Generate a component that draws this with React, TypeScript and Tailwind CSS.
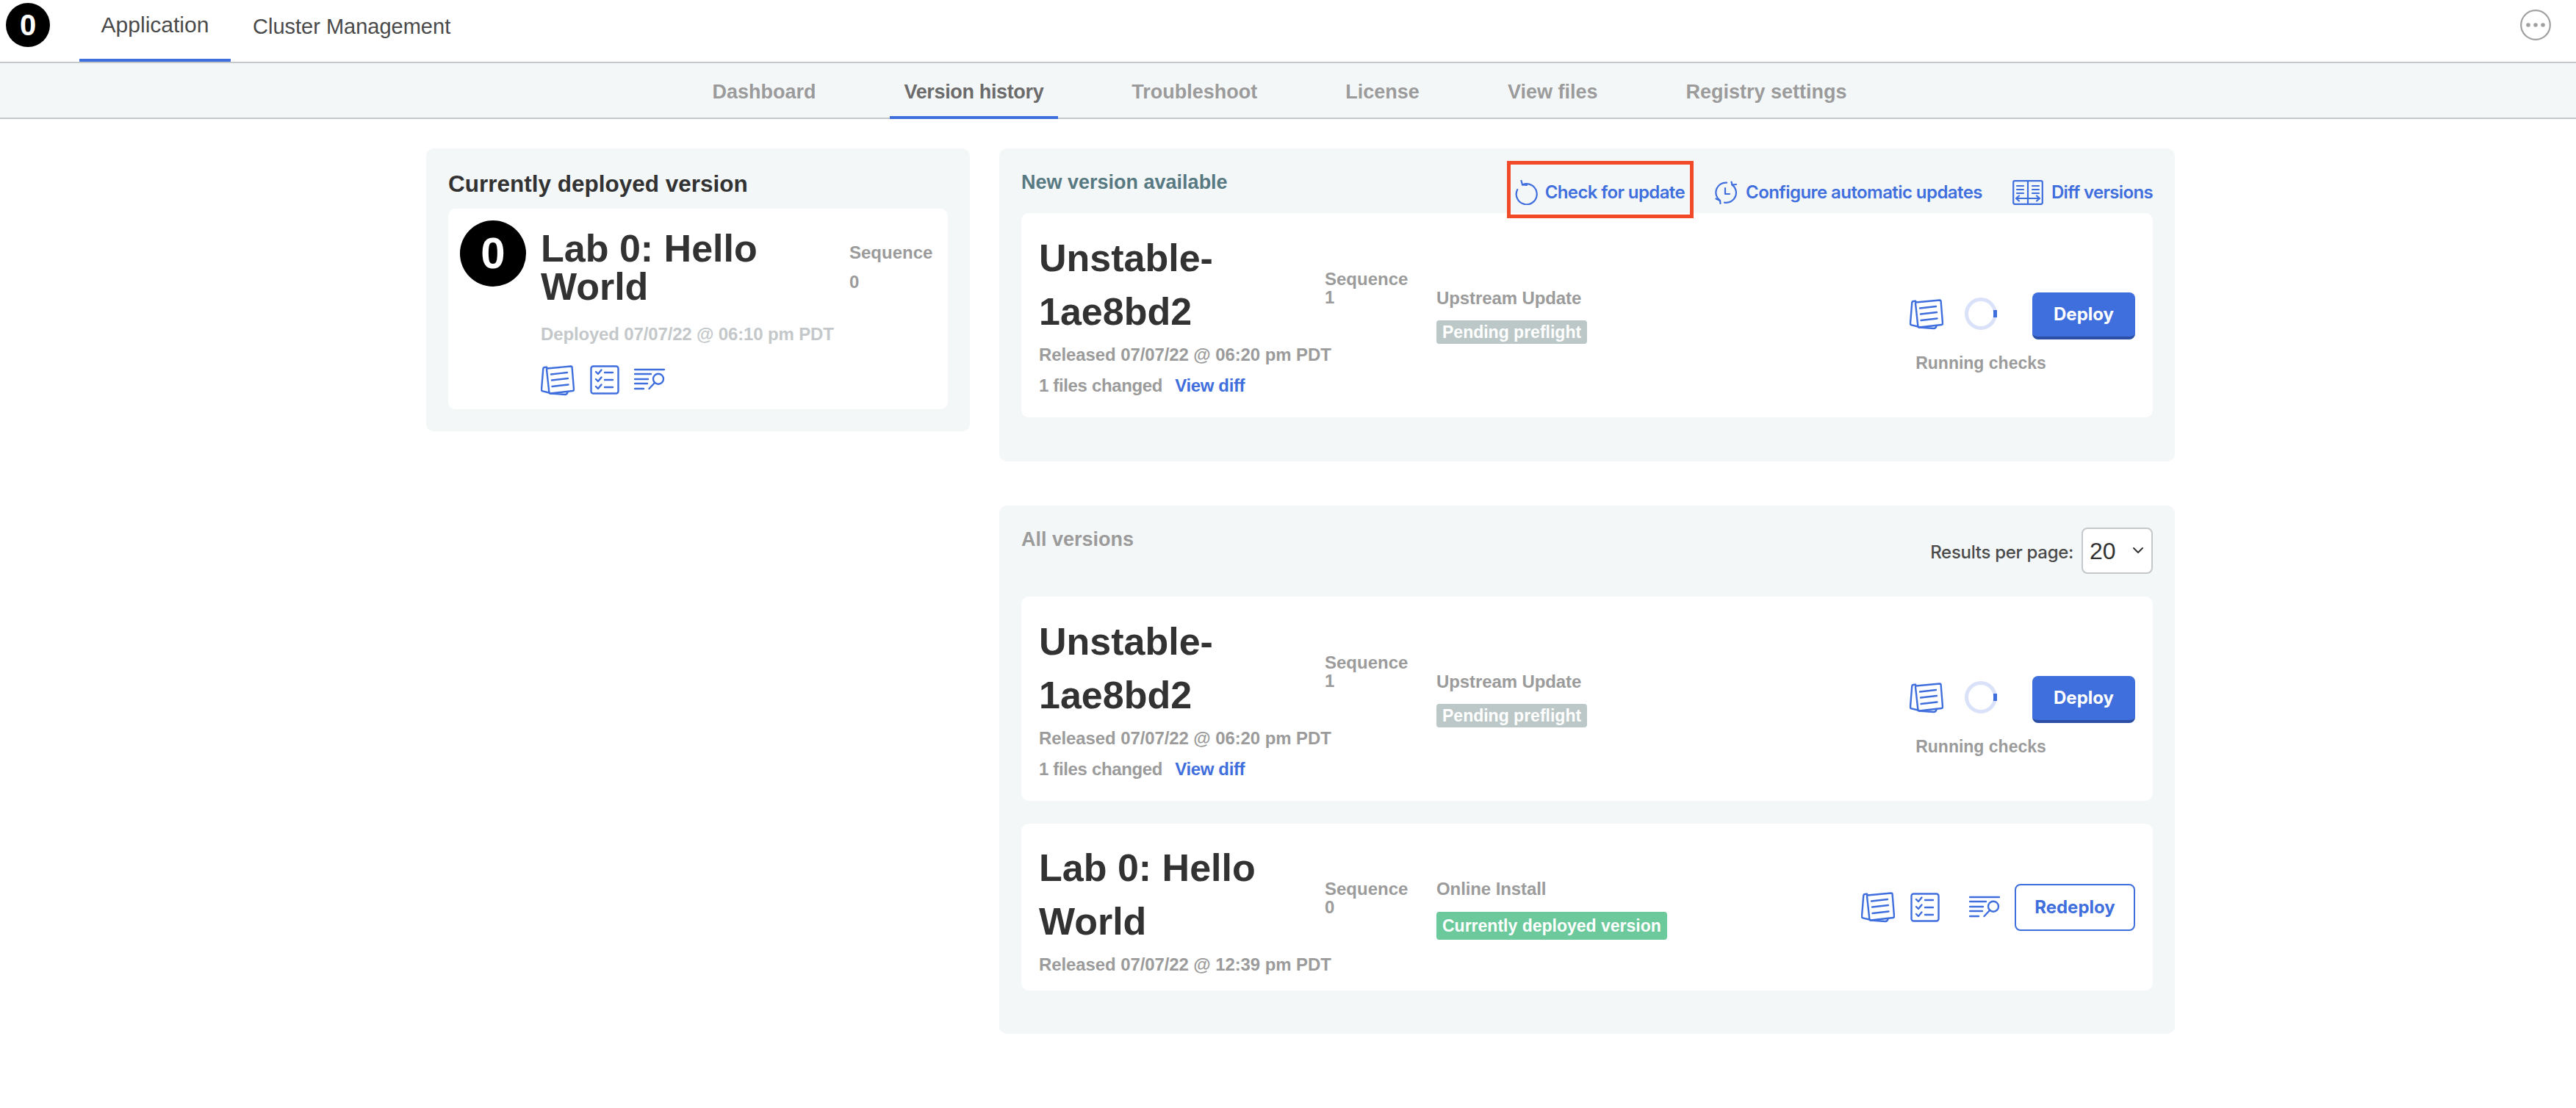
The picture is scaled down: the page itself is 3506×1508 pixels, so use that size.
import { ChevronDown } from 'lucide-react';

const NotesIcon = () => (
    <svg width="46" height="42" viewBox="0 0 46 42" fill="none" stroke="#3f6edd" strokeWidth="2.4" strokeLinecap="round" strokeLinejoin="round">
        <path d="M8.5 4.5 L41 1.5 Q42.5 1.5 42.6 3 L45 33 Q45 35 43.5 35 L13 38.5 Q11.6 38.6 11.4 37 L8 6 Q8 4.6 8.5 4.5 Z" />
        <path d="M8.2 2.8 L5 3 Q3.5 3.2 3.3 4.6 L1 33 Q0.9 35 2.5 35.4 L11.5 37.5" />
        <path d="M13 38.5 L33 40 Q35.5 40 36.5 37" />
        <path d="M14 12.5 L36 10 M15 20.5 L37 18 M15.5 29 L37.5 26.5" />
    </svg>
);

const ChecklistIcon = () => (
    <svg width="40" height="40" viewBox="0 0 40 40" fill="none" stroke="#3f6edd" strokeWidth="2.4" strokeLinecap="round" strokeLinejoin="round">
        <rect x="1.5" y="1.5" width="37" height="37" rx="3" />
        <path d="M8 9 L11 12 L15.5 6.5 M8 19 L11 22 L15.5 16.5 M8 29 L11 32 L15.5 26.5" />
        <path d="M20 10 H31 M20 20 H31 M20 30 H31" />
    </svg>
);

const LogSearchIcon = () => (
    <svg width="42" height="40" viewBox="0 0 42 40" fill="none" stroke="#3f6edd" strokeWidth="2.4" strokeLinecap="round">
        <path d="M1 6 H41 M1 12 H23 M1 19 H19 M1 25 H18 M1 32 H13" />
        <circle cx="33" cy="18.7" r="7" />
        <path d="M28 24 L20.5 32" />
    </svg>
);

const SpinnerIcon = () => (
    <svg width="44" height="44" viewBox="0 0 44 44" fill="none">
        <circle cx="22" cy="22" r="19.5" stroke="#d9e2f8" strokeWidth="5" />
        <path d="M41.5 17 V27" stroke="#3f6edd" strokeWidth="5" />
    </svg>
);

const RefreshIcon = () => (
    <svg width="32" height="34" viewBox="0 0 32 34" fill="none" stroke="#3f6edd" strokeWidth="2.2" strokeLinecap="round" strokeLinejoin="round">
        <path d="M10 6.5 A14 14 0 1 1 3.2 13" />
        <path d="M8.5 1 L10 6.5 L16 7" />
    </svg>
);

const ClockSyncIcon = () => (
    <svg width="32" height="32" viewBox="0 0 32 32" fill="none" stroke="#3f6edd" strokeWidth="2.2" strokeLinecap="round" strokeLinejoin="round">
        <path d="M17 2.6 A13.5 13.5 0 0 0 8 27" />
        <path d="M2.5 24.5 L8 27 L8.5 31" />
        <path d="M14 29.6 A13.5 13.5 0 0 0 24.5 5.5" />
        <path d="M23.5 1.5 L24.5 5.5 L30 5" />
        <path d="M15 10 V18 H21" />
    </svg>
);

const DiffIcon = () => (
    <svg width="42" height="34" viewBox="0 0 42 34" fill="none" stroke="#3f6edd" strokeWidth="2.2" strokeLinecap="round" strokeLinejoin="round">
        <rect x="1.2" y="1.2" width="39.6" height="31.6" rx="2" />
        <path d="M21 1.2 V32.8" />
        <path d="M6 8 H15 M6 13 H15 M6 18 H15 M27 8 H36 M27 13 H36 M27 18 H36" />
        <path d="M5 25 H37 M9 21.5 L5 25 L9 28.5 M33 21.5 L37 25 L33 28.5" />
    </svg>
);

const MoreIcon = () => (
    <svg width="42" height="42" viewBox="0 0 42 42" fill="none">
        <circle cx="21" cy="21" r="19.8" stroke="#a0a0a0" strokeWidth="2.2" />
        <circle cx="11" cy="21" r="2.8" fill="#a0a0a0" />
        <circle cx="21" cy="21" r="2.8" fill="#a0a0a0" />
        <circle cx="31" cy="21" r="2.8" fill="#a0a0a0" />
    </svg>
);

const tabs = ['Dashboard', 'Version history', 'Troubleshoot', 'License', 'View files', 'Registry settings'];

function PendingActions() {
    return (
        <div className="ml-auto self-start mt-[108px] flex items-start">
            <div className="mt-[9px]"><NotesIcon /></div>
            <div className="ml-[29px] mt-[7px] flex w-[44px] flex-col items-center">
                <SpinnerIcon />
                <div className="mt-[30px] whitespace-nowrap text-[23px] leading-[30px] font-bold text-[#9b9b9b]">Running checks</div>
            </div>
            <button className="ml-[48px] h-[64px] w-[140px] rounded-[8px] border-b-[4px] border-[#2c4fa5] bg-[#3f6edd] font-['Inter'] text-[24px] font-bold text-white">Deploy</button>
        </div>
    );
}

function UnstableRow() {
    return (
        <div className="flex h-[278px] items-center rounded-[10px] bg-white px-[24px]">
            <div className="w-[541px] self-start pt-[25px]">
                <div className="flex items-center">
                    <div className="w-[389px] text-[52px] leading-[72.5px] font-bold text-[#323232]">Unstable-<br />1ae8bd2</div>
                    <div className="pt-[9px] text-[24px] leading-[25px] font-bold text-[#9b9b9b]">Sequence<br />1</div>
                </div>
                <div className="mt-[8px] whitespace-nowrap text-[24px] leading-[30px] font-bold tracking-[-0.1px] text-[#9b9b9b]">Released 07/07/22 @ 06:20 pm PDT</div>
                <div className="mt-[12px] text-[24px] leading-[30px] font-bold tracking-[-0.35px] text-[#9b9b9b]">1 files changed<a className="ml-[17px] text-[#3f6edd]">View diff</a></div>
            </div>
            <div className="flex flex-col items-start">
                <div className="text-[24px] leading-[30px] font-bold tracking-[-0.1px] text-[#9b9b9b]">Upstream Update</div>
                <div className="mt-[15px] rounded-[4px] bg-[#bcc7c7] px-[8px] text-[23px] leading-[32px] font-bold text-white">Pending preflight</div>
            </div>
            <PendingActions />
        </div>
    );
}

export default function App() {
    return (
        <div className="min-h-screen bg-white font-['Liberation_Sans',Arial,sans-serif]">
            <header className="flex h-[86px] items-start border-b-[2px] border-[#c4c8ca] bg-white pl-[8px] pr-[34px]">
                <div className="mt-[4px] flex h-[60px] w-[60px] items-center justify-center rounded-full bg-black text-[40px] font-bold text-white">0</div>
                <nav className="ml-[40px] flex h-[84px] items-start">
                    <a className="h-[84px] w-[206px] border-b-[4px] border-[#3f6edd] pt-[14px] text-center text-[30px] leading-[40px] font-medium text-[#4a4a4a]">Application</a>
                    <a className="ml-[30px] pt-[16px] text-[29px] leading-[40px] font-medium text-[#4a4a4a]">Cluster Management</a>
                </nav>
                <div className="ml-auto mt-[13px]"><MoreIcon /></div>
            </header>

            <div className="flex h-[76px] justify-center border-b-[2px] border-[#c4c8ca] bg-[#f4f7f8] pr-[23px]">
                {tabs.map((tab) => (
                    <a
                        key={tab}
                        className={`-mb-[2px] mx-[40px] h-[76px] whitespace-nowrap px-[20px] pt-[20px] text-[27px] leading-[38px] font-bold ${tab === 'Version history' ? 'border-b-[4px] border-[#3f6edd] tracking-[-0.35px] text-[#6b6b6b]' : 'text-[#9b9b9b]'}`}
                    >
                        {tab}
                    </a>
                ))}
            </div>

            <main className="flex items-start gap-[40px] pl-[580px] pt-[40px]">
                <section className="h-[385px] w-[740px] rounded-[10px] bg-[#f4f7f8] px-[30px] pt-[28px]">
                    <h2 className="whitespace-nowrap text-[31.5px] leading-[40px] font-bold text-[#323232]">Currently deployed version</h2>
                    <div className="mt-[14px] flex h-[273px] rounded-[10px] bg-white pl-[16px] pt-[16px]">
                        <div className="flex h-[90px] w-[90px] items-center justify-center rounded-full bg-black text-[60px] font-bold text-white">0</div>
                        <div className="ml-[20px] w-[420px] pt-[12px]">
                            <div className="text-[52px] leading-[52px] font-bold text-[#323232]">Lab 0: Hello World</div>
                            <div className="mt-[24px] whitespace-nowrap text-[24px] leading-[30px] font-bold tracking-[-0.15px] text-[#c4c8ca]">Deployed 07/07/22 @ 06:10 pm PDT</div>
                            <div className="mt-[27px] flex">
                                <NotesIcon />
                                <div className="ml-[21px]"><ChecklistIcon /></div>
                                <div className="ml-[20px]"><LogSearchIcon /></div>
                            </div>
                        </div>
                        <div className="pt-[29px] text-[24px] font-bold text-[#9b9b9b]">
                            <div className="leading-[30px]">Sequence</div>
                            <div className="mt-[10px] leading-[30px]">0</div>
                        </div>
                    </div>
                </section>

                <div className="w-[1600px]">
                    <section className="relative h-[426px] rounded-[10px] bg-[#f4f7f8] px-[30px]">
                        <div className="flex h-[88px] items-start">
                            <h2 className="pt-[28px] text-[27px] leading-[36px] font-bold text-[#577981]">New version available</h2>
                            <div className="ml-auto mt-[42px] flex items-center font-['Inter'] text-[24px] font-semibold text-[#3f6edd]">
                                <RefreshIcon />
                                <a className="ml-[9px] whitespace-nowrap tracking-[-0.6px]">Check for update</a>
                                <div className="ml-[40px]"><ClockSyncIcon /></div>
                                <a className="ml-[11px] whitespace-nowrap tracking-[-0.57px]">Configure automatic updates</a>
                                <div className="ml-[41px]"><DiffIcon /></div>
                                <a className="ml-[11px] whitespace-nowrap tracking-[-0.66px]">Diff versions</a>
                            </div>
                        </div>
                        <UnstableRow />
                        {/* annotation drawn over the screenshot */}
                        <div className="absolute left-[691px] top-[17px] h-[78px] w-[254px] border-[5px] border-[#f04a28]" />
                    </section>

                    <section className="mt-[60px] h-[719px] rounded-[10px] bg-[#f4f7f8] px-[30px]">
                        <div className="flex h-[124px] items-start">
                            <h2 className="pt-[28px] text-[27px] leading-[36px] font-bold text-[#9b9b9b]">All versions</h2>
                            <div className="ml-auto mt-[30px] flex items-center">
                                <span className="relative top-[2px] font-['Inter'] text-[24px] font-medium tracking-[-0.3px] text-[#4a4a4a]">Results per page:</span>
                                <div className="relative ml-[11px] h-[63px] w-[97px]">
                                    <select defaultValue="20" className="h-full w-full appearance-none rounded-[8px] border-[2px] border-[#c4c8ca] bg-white pl-[9px] text-[32px] text-[#323232]">
                                        <option>20</option>
                                    </select>
                                    <ChevronDown className="pointer-events-none absolute right-[8px] top-[19px]" size={24} color="#323232" strokeWidth={2} />
                                </div>
                            </div>
                        </div>
                        <UnstableRow />
                        <div className="mt-[31px] flex h-[227px] items-center rounded-[10px] bg-white px-[24px]">
                            <div className="w-[541px] self-start pt-[24px]">
                                <div className="flex items-center">
                                    <div className="w-[389px] text-[52px] leading-[72.5px] font-bold text-[#323232]">Lab 0: Hello<br />World</div>
                                    <div className="pt-[9px] text-[24px] leading-[25px] font-bold text-[#9b9b9b]">Sequence<br />0</div>
                                </div>
                                <div className="mt-[8px] whitespace-nowrap text-[24px] leading-[30px] font-bold tracking-[-0.1px] text-[#9b9b9b]">Released 07/07/22 @ 12:39 pm PDT</div>
                            </div>
                            <div className="flex flex-col items-start self-start pt-[74px]">
                                <div className="text-[24px] leading-[30px] font-bold tracking-[-0.1px] text-[#9b9b9b]">Online Install</div>
                                <div className="mt-[16px] rounded-[4px] bg-[#6bc99b] px-[8px] text-[23px] leading-[38px] font-bold text-white">Currently deployed version</div>
                            </div>
                            <div className="ml-auto flex items-center">
                                <NotesIcon />
                                <div className="ml-[21px]"><ChecklistIcon /></div>
                                <div className="ml-[40px]"><LogSearchIcon /></div>
                                <button className="ml-[20px] h-[64px] w-[164px] rounded-[8px] border-[2px] border-[#3f6edd] bg-white font-['Inter'] text-[24px] font-bold text-[#3f6edd]">Redeploy</button>
                            </div>
                        </div>
                    </section>
                </div>
            </main>
        </div>
    );
}
